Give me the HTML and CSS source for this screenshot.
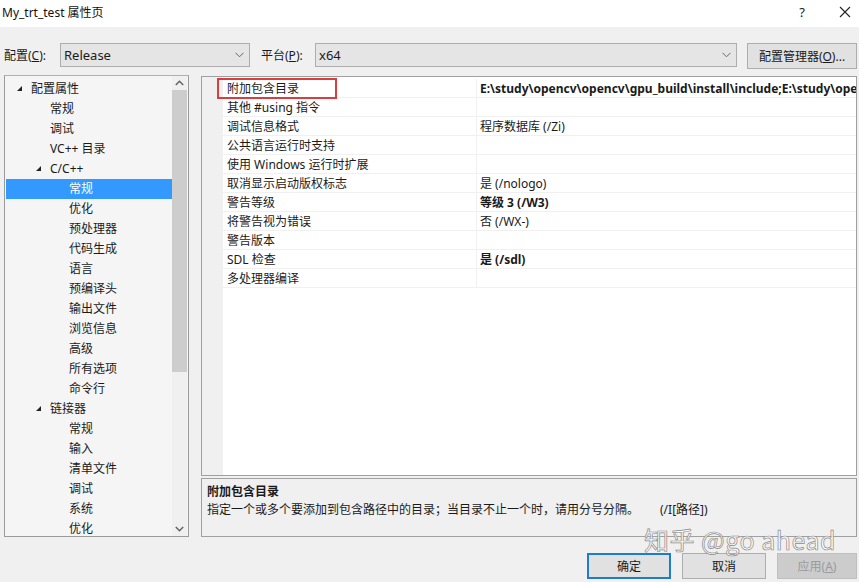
FILE: index.html
```html
<!DOCTYPE html>
<html lang="zh-CN">
<head>
    <meta charset="UTF-8">
    <title>My_trt_test 属性页</title>
    <link rel="stylesheet" href="styles.css">
</head>
<body>
    <div class="titlebar">
        <div class="window-title">My_trt_test 属性页</div>
        <div class="title-buttons">
            <span class="help">?</span>
            <svg class="close" width="12" height="12" viewBox="0 0 12 12"><path d="M1 1L11 11M11 1L1 11" stroke="#222" stroke-width="1.1"/></svg>
        </div>
    </div>

    <div class="toolbar">
        <label class="field-label config-label">配置(<u>C</u>):</label>
        <div class="combo combo-config">
            <span>Release</span>
            <svg class="chevron" width="9" height="6" viewBox="0 0 9 6"><path d="M0.5 0.8L4.5 4.8L8.5 0.8" fill="none" stroke="#666" stroke-width="1"/></svg>
        </div>
        <label class="field-label platform-label">平台(<u>P</u>):</label>
        <div class="combo combo-platform">
            <span>x64</span>
            <svg class="chevron" width="9" height="6" viewBox="0 0 9 6"><path d="M0.5 0.8L4.5 4.8L8.5 0.8" fill="none" stroke="#666" stroke-width="1"/></svg>
        </div>
        <button class="btn btn-manager">配置管理器(<u>O</u>)...</button>
    </div>

    <div class="main">
        <div class="tree">
            <div class="tree-items">
                <div class="tree-item level-0"><span class="arrow"></span>配置属性</div>
                <div class="tree-item level-1">常规</div>
                <div class="tree-item level-1">调试</div>
                <div class="tree-item level-1">VC++ 目录</div>
                <div class="tree-item level-1 expanded"><span class="arrow"></span>C/C++</div>
                <div class="tree-item level-2 selected">常规</div>
                <div class="tree-item level-2">优化</div>
                <div class="tree-item level-2">预处理器</div>
                <div class="tree-item level-2">代码生成</div>
                <div class="tree-item level-2">语言</div>
                <div class="tree-item level-2">预编译头</div>
                <div class="tree-item level-2">输出文件</div>
                <div class="tree-item level-2">浏览信息</div>
                <div class="tree-item level-2">高级</div>
                <div class="tree-item level-2">所有选项</div>
                <div class="tree-item level-2">命令行</div>
                <div class="tree-item level-1 expanded"><span class="arrow"></span>链接器</div>
                <div class="tree-item level-2">常规</div>
                <div class="tree-item level-2">输入</div>
                <div class="tree-item level-2">清单文件</div>
                <div class="tree-item level-2">调试</div>
                <div class="tree-item level-2">系统</div>
                <div class="tree-item level-2">优化</div>
            </div>
            <div class="scrollbar">
                <svg class="scroll-arrow" width="9" height="6" viewBox="0 0 9 6"><path d="M0.8 5L4.5 1.3L8.2 5" fill="none" stroke="#606060" stroke-width="1.4"/></svg>
                <div class="scroll-thumb"></div>
                <div class="scroll-space"></div>
                <svg class="scroll-arrow" width="9" height="6" viewBox="0 0 9 6"><path d="M0.8 1L4.5 4.7L8.2 1" fill="none" stroke="#606060" stroke-width="1.4"/></svg>
            </div>
        </div>

        <div class="right-pane">
            <div class="grid">
                <div class="grid-band"></div>
                <div class="grid-rows">
                    <div class="grid-row"><div class="name">附加包含目录</div><div class="value bold">E:\study\opencv\opencv\gpu_build\install\include;E:\study\opencv\opencv\gpu_build\install\include\opencv2</div></div>
                    <div class="grid-row"><div class="name">其他 #using 指令</div><div class="value"></div></div>
                    <div class="grid-row"><div class="name">调试信息格式</div><div class="value">程序数据库 (/Zi)</div></div>
                    <div class="grid-row"><div class="name">公共语言运行时支持</div><div class="value"></div></div>
                    <div class="grid-row"><div class="name">使用 Windows 运行时扩展</div><div class="value"></div></div>
                    <div class="grid-row"><div class="name">取消显示启动版权标志</div><div class="value">是 (/nologo)</div></div>
                    <div class="grid-row"><div class="name">警告等级</div><div class="value bold">等级 3 (/W3)</div></div>
                    <div class="grid-row"><div class="name">将警告视为错误</div><div class="value">否 (/WX-)</div></div>
                    <div class="grid-row"><div class="name">警告版本</div><div class="value"></div></div>
                    <div class="grid-row"><div class="name">SDL 检查</div><div class="value bold">是 (/sdl)</div></div>
                    <div class="grid-row"><div class="name">多处理器编译</div><div class="value"></div></div>
                </div>
                <div class="highlight-box"></div>
            </div>
            <div class="description">
                <div class="desc-title">附加包含目录</div>
                <div class="desc-text">指定一个或多个要添加到包含路径中的目录；当目录不止一个时，请用分号分隔。<span class="desc-switch">(/I[路径])</span></div>
            </div>
        </div>
    </div>

    <div class="footer">
        <button class="btn btn-footer default">确定</button>
        <button class="btn btn-footer">取消</button>
        <button class="btn btn-footer disabled">应用(<u>A</u>)</button>
    </div>

    <div class="watermark">知乎 @go ahead</div>
</body>
</html>
```

FILE: styles.css
```css
body {
    font-family: "Noto Sans", "Noto Sans CJK SC", sans-serif;
    font-size: 12px;
    color: #1a1a1a;
    margin: 0;
    padding: 0;
    width: 859px;
    height: 582px;
    background-color: #f0f0f0;
    position: relative;
    overflow: hidden;
}

.titlebar {
    display: flex;
    justify-content: space-between;
    align-items: center;
    height: 27px;
    background-color: white;
}

.window-title {
    padding-left: 2px;
    margin-top: -3px;
    font-size: 12px;
    color: #111;
}

.title-buttons {
    display: flex;
    align-items: center;
    margin-top: -3px;
}

.help {
    font-size: 13px;
    margin-right: 34px;
}

.close {
    margin-right: 8px;
}

.toolbar {
    display: flex;
    align-items: center;
    padding: 15px 2px 0 4px;
    height: 26px;
}

.field-label {
    white-space: nowrap;
}

.config-label {
    width: 56px;
}

.platform-label {
    width: 54px;
    margin-left: 11px;
}

.combo {
    display: flex;
    justify-content: space-between;
    align-items: center;
    box-sizing: border-box;
    height: 24px;
    padding: 0 5px 0 3px;
    background-color: #e5e5e5;
    border: 1px solid #adadad;
    font-size: 13px;
}

.combo-config {
    width: 190px;
}

.combo-platform {
    width: 422px;
}

.btn {
    font-family: inherit;
    font-size: 12px;
    color: #1a1a1a;
    background-color: #e1e1e1;
    border: 1px solid #adadad;
    padding: 0;
    box-sizing: border-box;
}

.btn-manager {
    margin-left: 10px;
    width: 110px;
    height: 26px;
    margin-top: 2px;
}

.main {
    display: flex;
    padding: 7px 2px 0 4px;
    height: 463px;
}

.tree {
    display: flex;
    width: 186px;
    height: 462px;
    box-sizing: border-box;
    border: 1px solid #9a9a9a;
    border-top-color: #b0b0b0;
    background-color: #f5f5f5;
    overflow: hidden;
}

.tree-items {
    flex: 1;
    padding: 3px 0 0 1px;
}

.tree-item {
    position: relative;
    height: 20px;
    line-height: 20px;
    white-space: nowrap;
}

.tree-item.level-0 {
    padding-left: 25px;
}

.tree-item.level-1 {
    padding-left: 44px;
}

.tree-item.level-2 {
    padding-left: 63px;
}

.tree-item.selected {
    background-color: #3399ff;
    color: white;
}

.arrow {
    position: absolute;
    top: 7px;
    width: 0;
    height: 0;
    border-left: 5px solid transparent;
    border-bottom: 5px solid #222;
}

.level-0 .arrow {
    left: 11px;
}

.level-1 .arrow {
    left: 30px;
}

.scrollbar {
    display: flex;
    flex-direction: column;
    align-items: center;
    width: 15px;
    margin-right: 1px;
    background-color: #f0f0f0;
}

.scroll-arrow {
    flex: none;
    margin: 4px 0;
}

.scroll-thumb {
    width: 15px;
    height: 282px;
    background-color: #cdcdcd;
}

.scroll-space {
    flex: 1;
}

.right-pane {
    display: flex;
    flex-direction: column;
    margin-left: 12px;
    width: 656px;
}

.grid {
    position: relative;
    display: flex;
    height: 400px;
    margin-top: 1px;
    box-sizing: border-box;
    border: 1px solid #a0a0a0;
    background-color: white;
}

.grid-band {
    width: 21px;
    background-color: #f0f0f0;
}

.grid-rows {
    flex: 1;
    padding-top: 2px;
    overflow: hidden;
}

.grid-row {
    display: flex;
    height: 19px;
    line-height: 19px;
    border-bottom: 1px solid #f0f0f0;
    box-sizing: border-box;
}

.grid-row .name {
    width: 249px;
    padding-left: 4px;
    border-right: 1px solid #f0f0f0;
    white-space: nowrap;
    overflow: hidden;
}

.grid-row .value {
    flex: 1;
    padding-left: 3px;
    white-space: nowrap;
    overflow: hidden;
}

.value.bold {
    font-weight: bold;
}

.highlight-box {
    position: absolute;
    left: 15px;
    top: 1px;
    width: 120px;
    height: 21px;
    box-sizing: border-box;
    border: 2px solid #dc3b3f;
}

.description {
    margin-top: 2px;
    height: 59px;
    box-sizing: border-box;
    border: 1px solid #a0a0a0;
    background-color: #f0f0f0;
    padding: 4px 5px;
}

.desc-title {
    font-weight: bold;
    line-height: 18px;
}

.desc-text {
    line-height: 18px;
    white-space: nowrap;
}

.desc-switch {
    margin-left: 21px;
}

.footer {
    display: flex;
    justify-content: flex-end;
    gap: 11px;
    padding: 15px 2px 0 0;
}

.btn-footer {
    width: 84px;
    height: 26px;
}

.btn-footer.default {
    border: 2px solid #1e7ccf;
}

.btn-footer.disabled {
    width: 80px;
    background-color: #cccccc;
    border-color: #bfbfbf;
    color: #9a9a9a;
}

.watermark {
    position: absolute;
    left: 644px;
    top: 521px;
    font-family: "Noto Sans CJK SC", sans-serif;
    font-size: 25px;
    color: rgba(255, 255, 255, 0.92);
    -webkit-text-stroke: 0.7px #8a8a8a;
    letter-spacing: 0.5px;
    white-space: nowrap;
}
```
